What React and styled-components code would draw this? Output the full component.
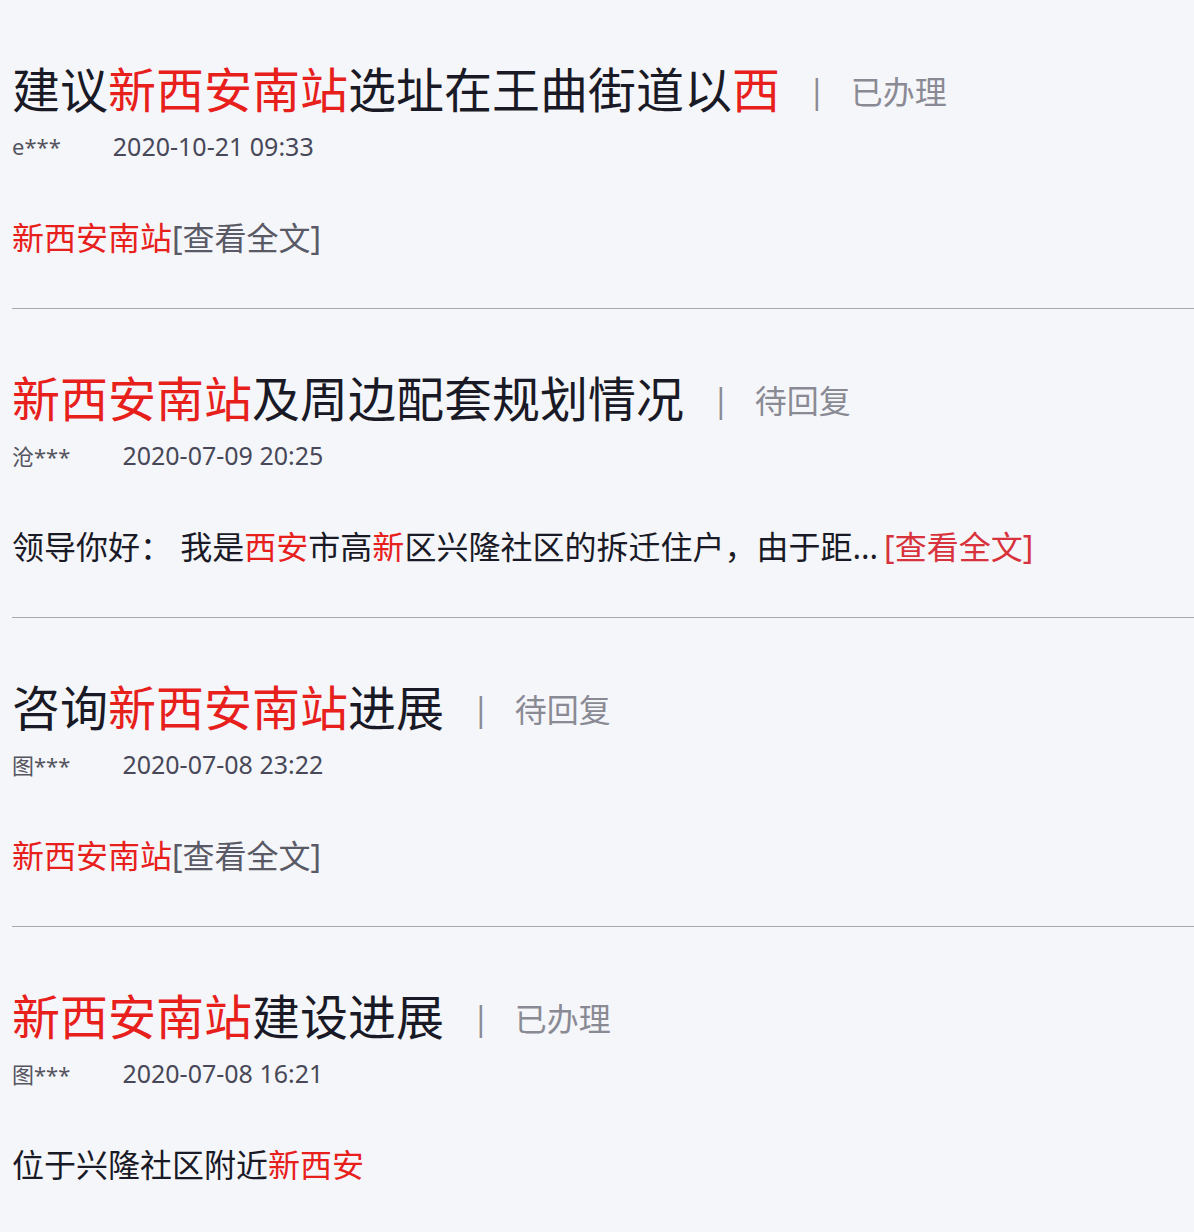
import React from "react";
import styled, { createGlobalStyle } from "styled-components";

const items = [
    {
        title: [["建议"], ["新西安南站", true], ["选址在王曲街道以"], ["西", true]],
        status: "已办理",
        user: "e***",
        date: "2020-10-21 09:33",
        body: [["新西安南站", true]],
        more: "gray",
    },
    {
        title: [["新西安南站", true], ["及周边配套规划情况"]],
        status: "待回复",
        user: "沧***",
        date: "2020-07-09 20:25",
        body: [
            ["领导你好： 我是"],
            ["西安", true],
            ["市高"],
            ["新", true],
            ["区兴隆社区的拆迁住户，由于距..."],
        ],
        more: "red",
        spaced: true,
    },
    {
        title: [["咨询"], ["新西安南站", true], ["进展"]],
        status: "待回复",
        user: "图***",
        date: "2020-07-08 23:22",
        body: [["新西安南站", true]],
        more: "gray",
    },
    {
        title: [["新西安南站", true], ["建设进展"]],
        status: "已办理",
        user: "图***",
        date: "2020-07-08 16:21",
        body: [["位于兴隆社区附近"], ["新西安", true]],
    },
];

const App = () => {
    return (
        <>
            <GlobalStyle />
            <List>
                {items.map((item, i) => (
                    <Item key={i}>
                        <TitleRow>
                            <Title>
                                {item.title.map(([t, hl], j) =>
                                    hl ? <Hl key={j}>{t}</Hl> : <span key={j}>{t}</span>
                                )}
                            </Title>
                            <Sep>|</Sep>
                            <Status>{item.status}</Status>
                        </TitleRow>
                        <Meta>
                            <User>{item.user}</User>
                            <Date>{item.date}</Date>
                        </Meta>
                        <Body>
                            {item.body.map(([t, hl], j) =>
                                hl ? <Hl key={j}>{t}</Hl> : <span key={j}>{t}</span>
                            )}
                            {item.more && (
                                <More $tone={item.more} $spaced={item.spaced}>
                                    [查看全文]
                                </More>
                            )}
                        </Body>
                    </Item>
                ))}
            </List>
        </>
    );
};

const GlobalStyle = createGlobalStyle`
body {
    margin: 0;
    background-color: #f5f6fa;
    font-family: "Noto Sans", "Noto Sans CJK SC", sans-serif;
}
`;

const List = styled.div`
padding-left: 12px;
`;

const Item = styled.div`
padding: 60px 0 50px;
border-bottom: 1px solid #a9a9b0;

&:last-child {
    border-bottom: none;
}
`;

const TitleRow = styled.div`
display: flex;
align-items: center;
height: 60px;
`;

const Title = styled.h2`
margin: 0;
font-size: 48px;
font-weight: 400;
line-height: 60px;
color: #1a1a26;
white-space: nowrap;
`;

const Hl = styled.span`
color: #e8201c;
`;

const Sep = styled.span`
margin-left: 28px;
font-size: 32px;
color: #8a8a94;
`;

const Status = styled.span`
margin-left: 25px;
font-size: 32px;
color: #8a8a94;
`;

const Meta = styled.div`
display: flex;
align-items: center;
margin-top: 11px;
height: 30px;
`;

const User = styled.span`
margin-right: 52px;
font-size: 22px;
color: #55555f;
`;

const Date = styled.span`
font-size: 25px;
color: #484858;
`;

const Body = styled.p`
margin: 57px 0 0;
font-size: 32px;
line-height: 40px;
color: #1a1a26;
white-space: nowrap;
`;

const More = styled.span`
margin-left: ${(p) => (p.$spaced ? "6px" : "0")};
color: ${(p) => (p.$tone === "red" ? "#d8323c" : "#5a5a66")};
`;

export default App;
